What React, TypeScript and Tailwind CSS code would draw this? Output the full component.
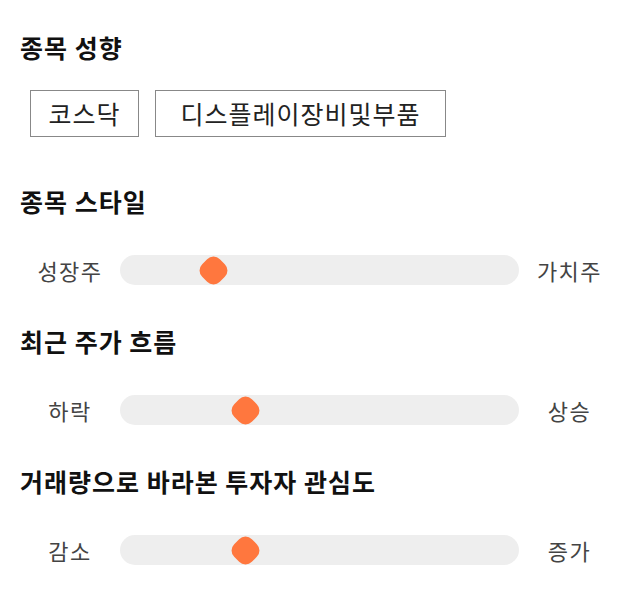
const font = { fontFamily: '"Noto Sans CJK KR", "Noto Sans", sans-serif' };

type Row = { title: string; left: string; right: string; pos: number };

const rows: Row[] = [
	{ title: "종목 스타일", left: "성장주", right: "가치주", pos: 93 },
	{ title: "최근 주가 흐름", left: "하락", right: "상승", pos: 125 },
	{ title: "거래량으로 바라본 투자자 관심도", left: "감소", right: "증가", pos: 125 },
];

const Slider = ({ left, right, pos }: { left: string; right: string; pos: number }) => {
	return (
		<div className="flex items-center h-[30px]">
			<span className="w-[100px] text-center text-[22px] tracking-[1.5px] text-[#444]">{left}</span>
			<div className="relative w-[399px] h-[30px] rounded-full bg-[#eeeeee]">
				{/* thumb */}
				<div
					className="absolute top-[2.5px] w-[25px] h-[25px] rounded-[9px] bg-[#ff773e] rotate-45"
					style={{ left: pos - 12.5 }}
				/>
			</div>
			<span className="w-[101px] text-center text-[22px] tracking-[1.5px] text-[#444]">{right}</span>
		</div>
	);
};

const App: React.FC = () => {
	return (
		<div className="w-[640px] h-[606px] bg-white px-[20px] pt-[29px]" style={font}>
			<h2 className="text-[25px] leading-[36px] font-bold tracking-[1px] text-[#111]">종목 성향</h2>
			<div className="flex gap-[16px] ml-[10px] mt-[25px]">
				<div className="w-[109px] h-[47px] flex items-center justify-center border border-[#888] text-[25px] tracking-[1px] text-[#222]">코스닥</div>
				<div className="w-[291px] h-[47px] flex items-center justify-center border border-[#888] text-[25px] tracking-[1px] text-[#222]">디스플레이장비및부품</div>
			</div>
			<div className="flex flex-col gap-[38px] mt-[46px]">
				{rows.map((r) => (
					<div key={r.title} className="flex flex-col gap-[36px]">
						<h2 className="text-[25px] leading-[36px] font-bold tracking-[1px] text-[#111]">{r.title}</h2>
						<Slider left={r.left} right={r.right} pos={r.pos} />
					</div>
				))}
			</div>
		</div>
	);
}

export default App
